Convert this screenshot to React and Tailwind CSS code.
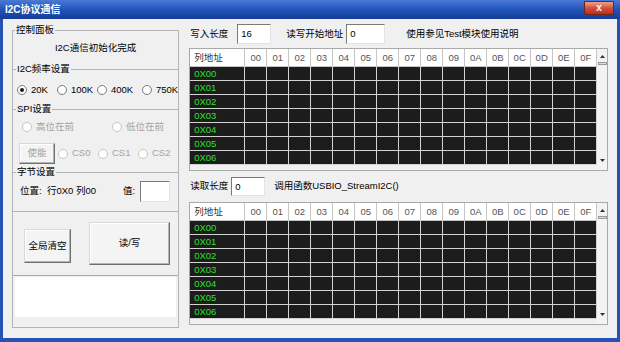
import React from "react";

const cols = ["00", "01", "02", "03", "04", "05", "06", "07", "08", "09", "0A", "0B", "0C", "0D", "0E", "0F"];
const rows = ["0X00", "0X01", "0X02", "0X03", "0X04", "0X05", "0X06"];

const Radio = ({ label, checked, disabled, className = "" }) => (
  <div className={`flex items-center gap-[4px] ${disabled ? "text-[#a3a3a3]" : "text-black"} ${className}`}>
    <span
      className={`w-[10px] h-[10px] rounded-full border bg-white flex items-center justify-center ${
        disabled ? "border-[#c6c6c6]" : "border-[#7c7c7c]"
      }`}
    >
      {checked && <span className="w-[4px] h-[4px] rounded-full bg-[#1a1a1a]" />}
    </span>
    <span>{label}</span>
  </div>
);

const Input = ({ value, className = "" }) => (
  <div
    className={`bg-white border border-t-[#7a7a7a] border-l-[#7a7a7a] border-b-[#e3e3e3] border-r-[#e3e3e3] pl-[3px] leading-[17px] ${className}`}
  >
    {value}
  </div>
);

const Button = ({ children, disabled, className = "" }) => (
  <div
    className={`flex items-center justify-center bg-[#f4f4f4] border border-t-[#d8d8d8] border-l-[#d8d8d8] border-b-[#6f6f6f] border-r-[#6f6f6f] shadow-[inset_-1px_-1px_0_#b5b5b5,inset_1px_1px_0_#ffffff] ${
      disabled ? "text-[#a3a3a3]" : "text-black"
    } ${className}`}
  >
    {children}
  </div>
);

const Scrollbar = () => (
  <div className="w-[11px] bg-[#f3f3f3] flex flex-col items-center">
    <svg width="7" height="5" viewBox="0 0 7 5" className="mt-[5px]">
      <path d="M3.5 1 L6 4 L1 4 Z" fill="#333" />
    </svg>
    <div className="mt-[3px] w-[9px] h-[3px] bg-[#dcdcdc] border border-[#9a9a9a]" />
    <div className="flex-1" />
    <svg width="7" height="5" viewBox="0 0 7 5" className="mb-[7px]">
      <path d="M1 1 L6 1 L3.5 4 Z" fill="#333" />
    </svg>
  </div>
);

const DataGrid = () => (
  <div className="h-[123px] w-[419px] border border-[#a9a9a9] bg-[#f0f0f0] flex">
    <div className="flex flex-col">
      <div className="flex h-[18px] bg-white">
        <div className="w-[55px] border-r border-b border-[#c6c6c6] pl-[4px] leading-[17px] text-[#333]">列地址</div>
        {cols.map((c) => (
          <div key={c} className="w-[22px] border-r border-b border-[#c6c6c6] text-center leading-[17px] text-[#555]">
            {c}
          </div>
        ))}
      </div>
      {rows.map((r) => (
        <div key={r} className="flex h-[14px]">
          <div className="w-[55px] bg-[#1c1c1c] border-r border-b border-[#d2d2d2] pl-[4px] leading-[13px] text-[#2ee02e]">
            {r}
          </div>
          {cols.map((c) => (
            <div key={c} className="w-[22px] bg-[#1c1c1c] border-r border-b border-[#d2d2d2]" />
          ))}
        </div>
      ))}
    </div>
    <div className="flex-1" />
    <Scrollbar />
  </div>
);

export default function App() {
  return (
    <div className="w-[620px] h-[342px] bg-[#2552b3] flex flex-col overflow-hidden font-['Liberation_Sans','Noto_Sans_CJK_SC',sans-serif] text-[9.5px] text-black">
      {/* title bar */}
      <div className="h-[19px] flex items-center bg-gradient-to-b from-[#4a7ad6] via-[#2154b8] to-[#163c98]">
        <span className="ml-[5px] text-white font-bold text-[10px] leading-[19px]">I2C协议通信</span>
        <div className="ml-auto mr-[6px] mb-[3px] w-[30px] h-[14px] rounded-b-[3px] border border-[#7a2014] bg-gradient-to-b from-[#eea08e] via-[#d2503a] to-[#b63220] flex items-center justify-center">
          <span className="text-white font-bold text-[10px] leading-[10px]">x</span>
        </div>
      </div>

      {/* body */}
      <div className="flex-1 mx-[3px] mb-[4px] bg-[#f0f0f0] flex">
        {/* left control panel */}
        <fieldset className="ml-[9px] mt-[3px] w-[165px] h-[306px] border border-[#b4b4b4] flex flex-col">
          <legend className="ml-[2px] px-[1px] leading-[16px]">控制面板</legend>
          <div className="h-[20px] leading-[20px] text-center">I2C通信初始化完成</div>

          <fieldset className="mt-[3px] border-t border-[#b4b4b4] pb-[3px]">
            <legend className="ml-[3px] px-[1px] leading-[16px]">I2C频率设置</legend>
            <div className="mt-[5px] h-[16px] flex items-center pl-[4px]">
              <Radio label="20K" checked className="w-[40px]" />
              <Radio label="100K" className="w-[40px]" />
              <Radio label="400K" className="w-[45px]" />
              <Radio label="750K" />
            </div>
          </fieldset>

          <fieldset className="border-t border-[#b4b4b4]">
            <legend className="ml-[3px] px-[1px] leading-[16px]">SPI设置</legend>
            <div className="mt-[2px] h-[16px] flex items-center pl-[9px]">
              <Radio label="高位在前" disabled className="w-[90px]" />
              <Radio label="低位在前" disabled />
            </div>
            <div className="mt-[8px] h-[21px] flex items-center pl-[6px]">
              <Button disabled className="w-[36px] h-[21px]">使能</Button>
              <Radio label="CS0" disabled className="ml-[3px] w-[40px]" />
              <Radio label="CS1" disabled className="w-[40px]" />
              <Radio label="CS2" disabled />
            </div>
          </fieldset>

          <fieldset className="border-t border-b border-[#b4b4b4] pb-[9px]">
            <legend className="ml-[3px] px-[1px] leading-[16px]">字节设置</legend>
            <div className="mt-[1px] h-[21px] flex items-center pl-[7px]">
              <span>位置:&nbsp;&nbsp;行0X0 列00</span>
              <span className="ml-auto">值:</span>
              <Input className="ml-[5px] mr-[8px] w-[30px] h-[21px]" value="" />
            </div>
          </fieldset>

          <div className="h-[63px] flex items-start">
            <Button className="ml-[11px] mt-[17px] w-[47px] h-[34px]">全局清空</Button>
            <Button className="ml-[18px] mt-[10px] w-[81px] h-[43px]">读/写</Button>
          </div>

          <div className="border-t border-[#a8a8a8] pt-[1px] px-[2px]">
            <div className="h-[40px] bg-white" />
          </div>
        </fieldset>

        {/* right data area */}
        <div className="ml-[10px] flex flex-col">
          <div className="mt-[5px] h-[20px] flex items-center">
            <span className="ml-[1px] w-[47px]">写入长度</span>
            <Input className="w-[34px] h-[20px]" value="16" />
            <span className="ml-[15px] w-[60px]">读写开始地址</span>
            <Input className="w-[39px] h-[20px]" value="0" />
            <span className="ml-[21px]">使用参见Test模块使用说明</span>
          </div>

          <div className="mt-[4px]">
            <DataGrid />
          </div>

          <div className="mt-[6px] h-[19px] flex items-center">
            <span className="ml-[1px] w-[41px]">读取长度</span>
            <Input className="w-[34px] h-[19px]" value="0" />
            <span className="ml-[9px]">调用函数USBIO_StreamI2C()</span>
          </div>

          <div className="mt-[6px]">
            <DataGrid />
          </div>
        </div>
      </div>
    </div>
  );
}
